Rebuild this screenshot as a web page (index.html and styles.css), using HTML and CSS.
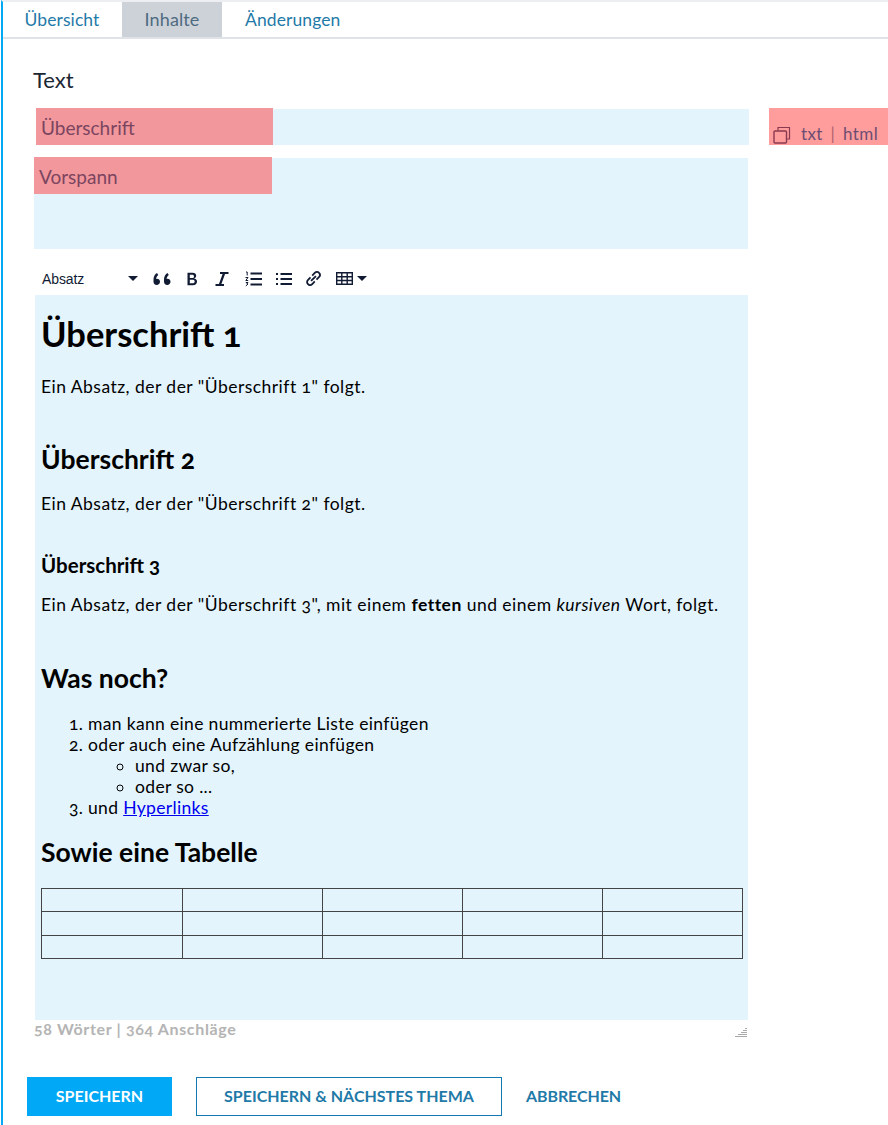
FILE: index.html
```html
<!DOCTYPE html>
<html lang="de">
<head>
    <meta charset="UTF-8">
    <meta name="viewport" content="width=device-width, initial-scale=1.0">
    <title>Inhalte</title>
    <link rel="stylesheet" href="styles.css">
</head>
<body>
    <div id="page">
        <nav class="tabs">
            <a class="tab">Übersicht</a>
            <a class="tab active">Inhalte</a>
            <a class="tab">Änderungen</a>
        </nav>

        <main class="content">
            <h2 class="section-title">Text</h2>

            <div class="title-row">
                <div class="field field-title">
                    <span class="field-label">Überschrift</span>
                </div>
                <div class="format-switch">
                    <svg class="copy-icon" viewBox="0 0 18 18" width="18" height="18">
                        <path d="M5 4.5V1.5H16.5V13H13.5" fill="none" stroke="#8a3a50" stroke-width="1.2"/>
                        <rect x="1" y="5" width="12.5" height="12" rx="1" fill="none" stroke="#8a3a50" stroke-width="1.4"/>
                    </svg>
                    <span class="format-links">txt <i>|</i> html</span>
                </div>
            </div>

            <div class="field field-lead">
                <span class="field-label">Vorspann</span>
            </div>

            <div class="toolbar">
                <span class="format-select">Absatz</span>
                <span class="caret"></span>
                <svg class="tool tool-quote" viewBox="0 0 18 14" width="18" height="14">
                    <path d="M4 1C2 2.2.5 4.3.5 7.5V9.5C.5 11.7 1.8 13 3.7 13 5.5 13 7 11.7 7 9.8 7 8 5.7 6.8 4 6.8 3.7 6.8 3.4 6.8 3.1 6.9 3.3 5.3 4 4 5.3 3.1Z" fill="#111b33"/>
                    <path d="M14.5 1C12.5 2.2 11 4.3 11 7.5V9.5C11 11.7 12.3 13 14.2 13 16 13 17.5 11.7 17.5 9.8 17.5 8 16.2 6.8 14.5 6.8 14.2 6.8 13.9 6.8 13.6 6.9 13.8 5.3 14.5 4 15.8 3.1Z" fill="#111b33"/>
                </svg>
                <svg class="tool tool-bold" viewBox="0 0 12 14" width="12" height="14">
                    <path d="M1.5 .8H6.5C8.9 .8 10.2 2 10.2 3.8 10.2 5.2 9.3 6.2 8 6.5 9.8 6.7 11 7.8 11 9.5 11 11.7 9.4 13.2 6.8 13.2H1.5ZM3.8 2.8V6H6.2C7.4 6 8 5.3 8 4.4 8 3.4 7.3 2.8 6.2 2.8ZM3.8 7.7V11.2H6.5C7.9 11.2 8.7 10.6 8.7 9.4 8.7 8.3 7.9 7.7 6.5 7.7Z" fill="#111b33" fill-rule="evenodd"/>
                </svg>
                <svg class="tool tool-italic" viewBox="0 0 14 14" width="14" height="14">
                    <path d="M5 1H13.5M.5 13H9M9.2 1L4.8 13" fill="none" stroke="#111b33" stroke-width="2.2"/>
                </svg>
                <svg class="tool tool-ol" viewBox="0 0 17 16" width="17" height="16">
                    <path d="M5.5 2.5H17M5.5 8H17M5.5 13.5H17" stroke="#111b33" stroke-width="2.2"/>
                    <path d="M1 1H2.2V4.5M.5 6.5H3L.8 9.5H3.2M.8 11.5H3L1.8 13H3L.8 15" fill="none" stroke="#111b33" stroke-width="1"/>
                </svg>
                <svg class="tool tool-ul" viewBox="0 0 16 14" width="16" height="14">
                    <path d="M4.5 2H16M4.5 7H16M4.5 12H16" stroke="#111b33" stroke-width="2.2"/>
                    <path d="M0 1H2V3H0ZM0 6H2V8H0ZM0 11H2V13H0Z" fill="#111b33"/>
                </svg>
                <svg class="tool tool-link" viewBox="0 0 16 16" width="17" height="17">
                    <path d="M6.8 5.2L9.2 2.8C10.4 1.6 12.1 1.5 13.2 2.7 14.4 3.9 14.3 5.5 13.1 6.7L10.8 9M9.2 10.8L6.8 13.2C5.6 14.4 3.9 14.5 2.8 13.3 1.6 12.1 1.7 10.5 2.9 9.3L5.2 7M5.7 10.3L10.3 5.7" fill="none" stroke="#111b33" stroke-width="1.7"/>
                </svg>
                <svg class="tool tool-table" viewBox="0 0 17 13" width="17" height="13">
                    <path d="M.7 .7H16.3V12.3H.7ZM.7 4.7H16.3M.7 8.5H16.3M5.8 .7V12.3M11.2 .7V12.3" fill="none" stroke="#111b33" stroke-width="1.4"/>
                </svg>
                <span class="caret caret-small"></span>
            </div>

            <div class="editor">
                <h1>Überschrift 1</h1>
                <p class="after-h1">Ein Absatz, der der "Überschrift 1" folgt.</p>
                <h2 class="first-h2">Überschrift 2</h2>
                <p class="after-h2">Ein Absatz, der der "Überschrift 2" folgt.</p>
                <h3>Überschrift 3</h3>
                <p class="after-h3">Ein Absatz, der der "Überschrift 3", mit einem <b>fetten</b> und einem <em>kursiven</em> Wort, folgt.</p>
                <h2 class="more-h2">Was noch?</h2>
                <ol>
                    <li>man kann eine nummerierte Liste einfügen</li>
                    <li>oder auch eine Aufzählung einfügen
                        <ul>
                            <li>und zwar so,</li>
                            <li>oder so ...</li>
                        </ul>
                    </li>
                    <li>und <a href="#">Hyperlinks</a></li>
                </ol>
                <h2 class="table-h2">Sowie eine Tabelle</h2>
                <table>
                    <tr><td></td><td></td><td></td><td></td><td></td></tr>
                    <tr><td></td><td></td><td></td><td></td><td></td></tr>
                    <tr><td></td><td></td><td></td><td></td><td></td></tr>
                </table>
            </div>

            <div class="statusbar">
                <span class="counts">58 Wörter | 364 Anschläge</span>
                <svg class="grip" viewBox="0 0 12 12" width="12" height="12">
                    <path d="M0 11.5H12M3 9.5H12M6 7.5H12M8 5.5H12M10 3.5H12" stroke="#a9a9a9" stroke-width="1"/>
                </svg>
            </div>

            <div class="actions">
                <button class="btn btn-primary">SPEICHERN</button>
                <button class="btn btn-outline">SPEICHERN &amp; NÄCHSTES THEMA</button>
                <button class="btn btn-plain">ABBRECHEN</button>
            </div>
        </main>
    </div>
</body>
</html>
```

FILE: styles.css
```css
* {
    box-sizing: border-box;
}
html, body {
    margin: 0;
    padding: 0;
}
body {
    font-family: Lato, "Open Sans", sans-serif;
    font-feature-settings: "onum";
    background-color: #fff;
    color: #000;
}
#page {
    width: 887px;
    height: 1125px;
    margin-left: 1px;
    overflow: hidden;
    border-left: 2px solid #00a8f5;
    border-top: 2px solid #eceef1;
}
.tabs {
    display: flex;
    height: 37px;
    border-bottom: 2px solid #dfe2e7;
}
.tab {
    display: flex;
    align-items: center;
    justify-content: center;
    width: 100px;
    font-size: 17.5px;
    letter-spacing: .1px;
    color: #1f7aa8;
    padding-bottom: 1px;
}
.tab:first-child {
    width: 119px;
    padding-right: 1px;
}
.tab:last-child {
    width: 118px;
    margin-left: 23px;
    justify-content: flex-start;
}
.tab.active {
    background-color: #cdd2d9;
    color: #4d6a80;
    font-size: 18px;
}
.content {
    padding-left: 31px;
}
.section-title {
    margin: 29px 0 0 -1px;
    height: 41px;
    font-size: 22px;
    font-weight: 400;
    line-height: 24px;
    color: #1c2733;
}
.title-row {
    display: flex;
    align-items: flex-start;
}
.field {
    position: relative;
    background-color: #e3f4fc;
}
.field-title {
    width: 713px;
    height: 36px;
    margin-left: 2px;
}
.field-title .field-label {
    width: 237px;
}
.field-lead {
    width: 714px;
    height: 91px;
    margin-top: 13px;
}
.field-label {
    position: absolute;
    left: 0;
    top: -1px;
    width: 238px;
    height: 37px;
    padding: 6px 5px 0;
    font-size: 19px;
    line-height: 28px;
    color: #7b4560;
    background-color: #f2979c;
}
.format-switch {
    display: flex;
    align-items: flex-end;
    width: 119px;
    height: 37px;
    margin-top: -1px;
    margin-left: 20px;
    padding: 0 0 1px 4px;
    background-color: #ff9c9c;
    color: #6e4d72;
}
.format-links {
    margin-left: 10px;
    font-size: 17px;
    letter-spacing: .4px;
    line-height: 20px;
}
.format-links i {
    margin: 0 3px;
    font-style: normal;
    color: #b0616c;
}
.toolbar {
    display: flex;
    align-items: center;
    width: 714px;
    height: 46px;
    padding: 13px 0 0 8px;
    color: #111b33;
}
.format-select {
    width: 86px;
    font-family: "Liberation Sans", Arial, sans-serif;
    font-size: 14px;
    letter-spacing: -.1px;
}
.caret {
    width: 0;
    height: 0;
    border-left: 5px solid transparent;
    border-right: 5px solid transparent;
    border-top: 5px solid #111b33;
}
.tool {
    flex: none;
}
.tool-quote { margin-left: 15px; }
.tool-bold { margin-left: 15px; }
.tool-italic { margin-left: 17px; }
.tool-ol { margin-left: 16px; }
.tool-ul { margin-left: 14px; }
.tool-link { margin-left: 13px; }
.tool-table { margin-left: 14px; }
.caret-small { margin-left: 4px; }
.editor {
    width: 713px;
    height: 725px;
    margin-left: 1px;
    padding: 1px 5px 0 6px;
    background-color: #e3f4fc;
    font-size: 17.5px;
    letter-spacing: .47px;
    line-height: 21px;
}
.editor h1 {
    margin: 14px 0 0;
    font-size: 34.5px;
    letter-spacing: 0;
    line-height: 48px;
}
.editor h2 {
    font-size: 26.5px;
    letter-spacing: 0;
    line-height: 34px;
}
.editor h3 {
    margin: 37px 0 0;
    font-size: 20.5px;
    letter-spacing: 0;
    line-height: 28px;
}
.editor p {
    margin: 0;
}
.after-h1 { padding-top: 18px; }
.first-h2 { margin: 45px 0 0; }
.after-h2 { padding-top: 17px; }
.after-h3 { padding-top: 15px; }
.more-h2 { margin: 46px 0 0; }
.editor ol {
    margin: 18px 0 0;
    padding-left: 47px;
    letter-spacing: .34px;
}
.editor ul {
    margin: 0;
    padding-left: 47px;
    list-style: circle;
}
.editor a {
    color: #0000ee;
}
.table-h2 { margin: 17px 0 0; letter-spacing: .1px; }
.editor table {
    width: 702px;
    margin-top: 19px;
    border-collapse: collapse;
    table-layout: fixed;
    border: 1px solid #222;
}
.editor td {
    height: 23.3px;
    border: 1px solid #444;
}
.editor td:first-child {
    width: 141px;
}
.statusbar {
    display: flex;
    justify-content: space-between;
    align-items: center;
    width: 714px;
    height: 20px;
    font-size: 16px;
    letter-spacing: .65px;
    font-weight: 700;
    line-height: 18px;
    color: #b4b4b4;
}
.counts {
    margin-bottom: 2px;
}
.grip {
    margin-top: 2px;
    margin-right: 1px;
}
.actions {
    display: flex;
    align-items: center;
    margin-top: 37px;
    margin-left: -7px;
    height: 39px;
}
.btn {
    height: 39px;
    border: none;
    padding: 0 0 3px;
    font-family: Lato, "Open Sans", sans-serif;
    font-size: 16px;
    font-weight: 700;
    cursor: pointer;
}
.btn-primary {
    width: 145px;
    background-color: #00a8f5;
    color: #fff;
}
.btn-outline {
    width: 306px;
    margin-left: 24px;
    background: #fff;
    border: 1px solid #1479b0;
    color: #1f7aa8;
}
.btn-plain {
    margin-left: 24px;
    background: none;
    letter-spacing: -.1px;
    color: #1f7aa8;
}
```
